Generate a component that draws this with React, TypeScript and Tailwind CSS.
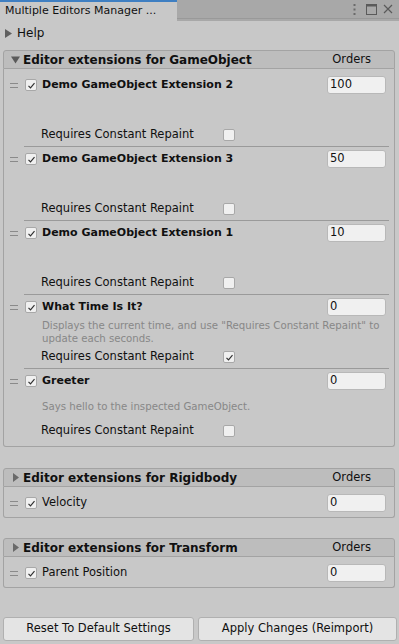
import React from "react";

function Handle() {
  return (
    <div className="w-[8px] ml-[6px] mr-[7px] flex flex-col gap-[3px] shrink-0">
      <div className="h-px bg-[#8a8a8a]" />
      <div className="h-px bg-[#8a8a8a]" />
    </div>
  );
}

function Check({ checked }: { checked: boolean }) {
  return (
    <div className="w-[12px] h-[12px] rounded-[2px] border border-[#a8a8a8] bg-[#f0f0f0] flex items-center justify-center shrink-0">
      {checked && (
        <svg width="9" height="9" viewBox="0 0 9 9">
          <path d="M1.5 4.8 L3.5 6.8 L7.5 2.2" stroke="#303030" strokeWidth="1.2" fill="none" />
        </svg>
      )}
    </div>
  );
}

function NumInput({ value }: { value: string }) {
  return (
    <div className="ml-auto mr-[8px] w-[59px] h-[18px] rounded-[3px] border border-[#b8b8b8] bg-[#f0f0f0] pl-[2px] flex items-center text-[#101010] text-[11.5px]">
      {value}
    </div>
  );
}

function TitleRow({ label, bold, value }: { label: string; bold?: boolean; value: string }) {
  return (
    <div className="h-[20px] flex items-center">
      <Handle />
      <Check checked />
      <span className={"ml-[5px] " + (bold ? "font-bold text-[11px]" : "text-[11.5px]")}>{label}</span>
      <NumInput value={value} />
    </div>
  );
}

function Block({
  label,
  value,
  desc,
  repaint,
  last,
}: {
  label: string;
  value: string;
  desc?: string;
  repaint: boolean;
  last?: boolean;
}) {
  return (
    <div className="flex flex-col">
      <TitleRow label={label} bold value={value} />
      <div className="h-[30px] flex items-center pl-[38px] pr-[6px] text-[#878787] text-[10.2px] leading-[13px]">
        {desc}
      </div>
      <div className="h-[20px] flex items-center text-[11.5px]">
        <span className="ml-[37px] w-[182px]">Requires Constant Repaint</span>
        <Check checked={repaint} />
      </div>
      {!last && (
        <div className="mt-[1px] mb-[2px] ml-[20px] mr-[5px] h-px bg-[#9a9a9a]" />
      )}
    </div>
  );
}

function Header({ title, open }: { title: string; open?: boolean }) {
  return (
    <div className="h-[19px] rounded-t-[3px] border border-[#a3a3a3] bg-[#bdbdbd] flex items-center">
      <div className="w-[16px] flex justify-end">
        {open ? (
          <svg width="9" height="8" viewBox="0 0 9 8">
            <path d="M0 0.5 H9 L4.5 7.5 Z" fill="#5a5a5a" />
          </svg>
        ) : (
          <svg width="8" height="9" viewBox="0 0 8 9">
            <path d="M1 0 L7 4.5 L1 9 Z" fill="#6a6a6a" />
          </svg>
        )}
      </div>
      <span className="ml-[3px] font-bold text-[12px]">{title}</span>
      <span className="ml-auto mr-[23px] text-[11.5px]">Orders</span>
    </div>
  );
}

export default function App() {
  return (
    <div className="w-[399px] h-[644px] bg-[#c8c8c8] flex flex-col font-['DejaVu_Sans',sans-serif] text-[11.5px] text-[#101010] overflow-hidden">
      <div className="h-[21px] bg-[#a8a8a8] flex items-start shrink-0">
        <div className="w-[177px] h-[21px] bg-[#c8c8c8] border-t-[2px] border-[#3f7fc2] flex items-center pl-[5px] text-[11px]">
          Multiple Editors Manager ...
        </div>
        <div className="ml-auto h-[19px] flex items-center gap-[6px] pr-[6px] border-b border-[#999999] flex-1 justify-end">
          <svg width="3" height="11" viewBox="0 0 3 11">
            <rect x="0.5" y="0" width="2" height="2" fill="#6a6a6a" />
            <rect x="0.5" y="4.5" width="2" height="2" fill="#6a6a6a" />
            <rect x="0.5" y="9" width="2" height="2" fill="#6a6a6a" />
          </svg>
          <svg width="11" height="11" viewBox="0 0 11 11" className="ml-[4px]">
            <rect x="0.5" y="0.5" width="10" height="10" fill="none" stroke="#5a5a5a" />
            <rect x="0.5" y="0.5" width="10" height="2" fill="#5a5a5a" />
          </svg>
          <svg width="10" height="10" viewBox="0 0 10 10">
            <path d="M1 1 L9 9 M9 1 L1 9" stroke="#5a5a5a" strokeWidth="1.2" />
          </svg>
        </div>
      </div>

      <div className="h-[22px] mt-[1px] flex items-center text-[12px]">
        <svg width="7" height="9" viewBox="0 0 7 9" className="ml-[5px]">
          <path d="M0 0 L7 4.5 L0 9 Z" fill="#606060" />
        </svg>
        <span className="ml-[5px]">Help</span>
      </div>

      <div className="ml-[3px] w-[392px] mt-[6px]">
        <Header title="Editor extensions for GameObject" open />
        <div className="border-x border-b border-[#a3a3a3] rounded-b-[3px] pt-[6px] pb-[5px]">
          <Block label="Demo GameObject Extension 2" value="100" repaint={false} />
          <Block label="Demo GameObject Extension 3" value="50" repaint={false} />
          <Block label="Demo GameObject Extension 1" value="10" repaint={false} />
          <Block
            label="What Time Is It?"
            value="0"
            desc={'Displays the current time, and use "Requires Constant Repaint" to update each seconds.'}
            repaint
          />
          <Block
            label="Greeter"
            value="0"
            desc="Says hello to the inspected GameObject."
            repaint={false}
            last
          />
        </div>
      </div>

      <div className="ml-[3px] w-[392px] mt-[21px]">
        <Header title="Editor extensions for Rigidbody" />
        <div className="border-x border-b border-[#a3a3a3] rounded-b-[3px] pt-[6px] pb-[4px]">
          <TitleRow label="Velocity" value="0" />
        </div>
      </div>

      <div className="ml-[3px] w-[392px] mt-[20px]">
        <Header title="Editor extensions for Transform" />
        <div className="border-x border-b border-[#a3a3a3] rounded-b-[3px] pt-[6px] pb-[4px]">
          <TitleRow label="Parent Position" value="0" />
        </div>
      </div>

      <div className="mt-auto mb-[3px] flex gap-[4px] ml-[3px] text-[11.5px]">
        <div className="w-[191px] h-[24px] rounded-[3px] border border-[#b0b0b0] bg-[#e4e4e4] flex items-center justify-center">
          Reset To Default Settings
        </div>
        <div className="w-[199px] h-[24px] rounded-[3px] border border-[#b0b0b0] bg-[#e4e4e4] flex items-center justify-center">
          Apply Changes (Reimport)
        </div>
      </div>
    </div>
  );
}
